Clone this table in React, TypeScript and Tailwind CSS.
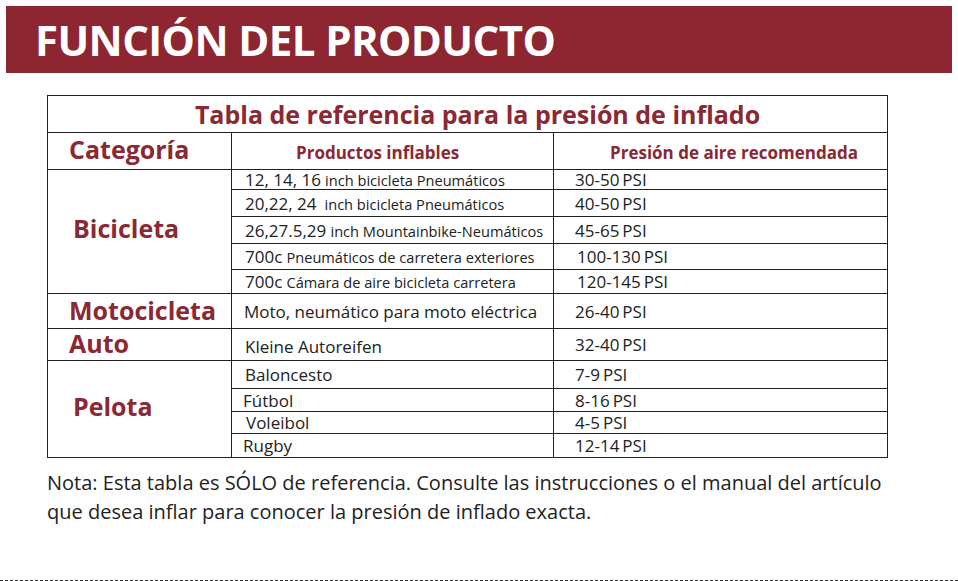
const maroon = 'text-[#8a2833]';

type Row = {
  lead?: string;
  rest?: string;
  text?: string;
  psi: string;
  h: string;
  pl?: string;
  psiPl?: string;
};

const bikeRows: Row[] = [
  { lead: '12, 14, 16', rest: 'inch bicicleta Pneumáticos', psi: '30-50', h: 'h-[20px]' },
  { lead: '20,22, 24', rest: '\u00a0inch bicicleta Pneumáticos', psi: '40-50', h: 'h-[27px]' },
  { lead: '26,27.5,29', rest: 'inch Mountainbike-Neumáticos', psi: '45-65', h: 'h-[27px]' },
  { lead: '700c', rest: 'Pneumáticos de carretera exteriores', psi: '100-130', h: 'h-[26px]', psiPl: 'pl-[23px]' },
  { lead: '700c', rest: 'Cámara de aire bicicleta carretera', psi: '120-145', h: 'h-[24px]', psiPl: 'pl-[23px]' },
];

const ballRows: Row[] = [
  { text: 'Baloncesto', psi: '7-9', h: 'h-[28px]' },
  { text: 'Fútbol', psi: '8-16', h: 'h-[23px]', pl: 'pl-[11px]' },
  { text: 'Voleibol', psi: '4-5', h: 'h-[22px]', pl: 'pl-[14px]' },
  { text: 'Rugby', psi: '12-14', h: 'h-[24px]', pl: 'pl-[11px]' },
];

function Psi({ value, pl = 'pl-[21px]' }: { value: string; pl?: string }) {
  return (
    <td className={`border border-[#222] ${pl} text-[17px] leading-none text-[#222]`}>
      <span>{value}</span>
      <span className="ml-[3px]">PSI</span>
    </td>
  );
}

function Product({ row }: { row: Row }) {
  if (row.text) {
    return (
      <td className={`border border-[#222] ${row.pl ?? 'pl-[13px]'} text-[17px] leading-none text-[#222]`}>
        {row.text}
      </td>
    );
  }
  return (
    <td className="border border-[#222] pl-[13px] leading-none text-[#222] whitespace-nowrap">
      <span className="text-[17px]">{row.lead}</span>{' '}
      <span className="text-[14.6px]">{row.rest}</span>
    </td>
  );
}

export default function App() {
  return (
    <div className="flex h-[581px] w-[958px] flex-col bg-white font-['Open_Sans',sans-serif]">
      <div className="mx-[6px] mt-[6px] flex h-[67px] items-center bg-[#8e2631] pl-[29px]">
        <h1 className="text-[42px] font-bold leading-none tracking-[-0.6px] text-white">
          FUNCIÓN DEL PRODUCTO
        </h1>
      </div>

      <table className="mt-[22px] ml-[47px] w-[840px] table-fixed border-collapse">
        <colgroup>
          <col className="w-[184px]" />
          <col className="w-[322px]" />
          <col className="w-[334px]" />
        </colgroup>
        <tbody>
          <tr className="h-[37px]">
            <td colSpan={3} className={`border border-[#222] pl-[20px] text-center text-[25px] font-bold leading-none ${maroon}`}>
              Tabla de referencia para la presión de inflado
            </td>
          </tr>
          <tr className="h-[37px]">
            <td className={`border border-[#222] pb-[3px] pl-[21px] text-[25px] font-bold leading-none ${maroon}`}>Categoría</td>
            <td className={`border border-[#222] pl-[64px] pt-[3px] text-[17px] font-bold leading-none ${maroon}`}>
              Productos inflables
            </td>
            <td className={`border border-[#222] pl-[56px] pt-[3px] text-[17px] font-bold leading-none ${maroon}`}>
              Presión de aire recomendada
            </td>
          </tr>

          {bikeRows.map((row, i) => (
            <tr key={row.psi} className={row.h}>
              {i === 0 && (
                <td rowSpan={5} className={`border border-[#222] pb-[6px] pl-[25px] text-[25px] font-bold leading-none ${maroon}`}>
                  Bicicleta
                </td>
              )}
              <Product row={row} />
              <Psi value={row.psi} pl={row.psiPl} />
            </tr>
          ))}

          <tr className="h-[35px]">
            <td className={`border border-[#222] pb-[1px] pl-[21px] text-[25px] font-bold leading-none ${maroon}`}>Motocicleta</td>
            <td className="border border-[#222] pl-[12px] text-[17px] leading-none text-[#222]">
              Moto, neumático para moto eléctrica
            </td>
            <Psi value="26-40" />
          </tr>
          <tr className="h-[32px]">
            <td className={`border border-[#222] pb-[2px] pl-[21px] text-[25px] font-bold leading-none ${maroon}`}>Auto</td>
            <td className="border border-[#222] pl-[13px] pt-[3px] text-[17px] leading-none text-[#222]">
              Kleine Autoreifen
            </td>
            <Psi value="32-40" />
          </tr>

          {ballRows.map((row, i) => (
            <tr key={row.psi} className={row.h}>
              {i === 0 && (
                <td rowSpan={4} className={`border border-[#222] pb-[5px] pl-[25px] text-[25px] font-bold leading-none ${maroon}`}>
                  Pelota
                </td>
              )}
              <Product row={row} />
              <Psi value={row.psi} />
            </tr>
          ))}
        </tbody>
      </table>

      <p className="mt-[10px] ml-[47px] whitespace-nowrap text-[20px] leading-[29px] text-[#222]">
        Nota: Esta tabla es SÓLO de referencia. Consulte las instrucciones o el manual del artículo
        <br />
        que desea inflar para conocer la presión de inflado exacta.
      </p>

      <div className="mt-auto h-px w-full border-t border-dashed border-[#333]" />
    </div>
  );
}
